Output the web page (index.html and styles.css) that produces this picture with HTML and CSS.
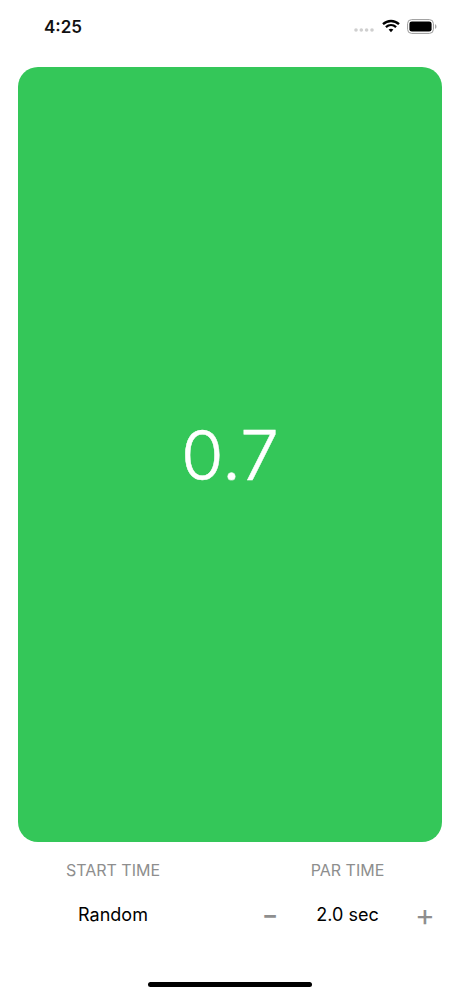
FILE: index.html
```html
<!DOCTYPE html>
<html lang="en">
<head>
<meta charset="utf-8">
<title>Timer</title>
<link rel="stylesheet" href="styles.css">
</head>
<body>
<div class="screen">
  <header class="status">
    <span class="clock">4:25</span>
    <div class="status-icons">
      <svg class="signal" width="21" height="4" viewBox="0 0 21 4"><g fill="#cfcfcf"><circle cx="2" cy="2" r="1.8"/><circle cx="7.3" cy="2" r="1.8"/><circle cx="12.6" cy="2" r="1.8"/><circle cx="18" cy="2" r="1.8"/></g></svg>
      <svg class="wifi" width="18" height="14" viewBox="0 0 18 14"><g fill="none" stroke="#000" stroke-width="2.3"><path d="M1 5.2C5.6 .9 12.4 .9 17 5.2"/><path d="M3.9 8.1C6.9 5.4 11.1 5.4 14.1 8.1"/></g><path d="M6.6 10.5C8 9.4 10 9.4 11.4 10.5L9 13.3Z" fill="#000"/></svg>
      <svg class="battery" width="30" height="15" viewBox="0 0 30 15"><rect x=".6" y=".6" width="25.8" height="13.8" rx="4" fill="#fff" stroke="#9a9a9a" stroke-width="1"/><rect x="2.4" y="2.4" width="22.2" height="10.2" rx="2.4" fill="#000"/><path d="M28 5.2c1 .4 1.5 1.2 1.5 2.3s-.5 1.900-1.500 2.300z" fill="#a8a8a8"/></svg>
    </div>
  </header>

  <main class="card">
    <span class="elapsed">0.7</span>
  </main>

  <section class="controls">
    <div class="control control-start">
      <span class="label">START TIME</span>
      <span class="value">Random</span>
    </div>
    <div class="control control-par">
      <span class="label">PAR TIME</span>
      <div class="stepper">
        <span class="step step-minus">−</span>
        <span class="value">2.0 sec</span>
        <span class="step step-plus">+</span>
      </div>
    </div>
  </section>

  <footer class="home-area">
    <div class="home-bar"></div>
  </footer>
</div>
</body>
</html>
```
FILE: styles.css
```css
* { box-sizing: border-box; }
html, body { margin: 0; padding: 0; background: #fff; }
body { font-family: Inter, "Liberation Sans", sans-serif; }

.screen {
  width: 460px;
  height: 996px;
  display: flex;
  flex-direction: column;
  overflow: hidden;
}

.status {
  height: 67px;
  flex: none;
  display: flex;
  justify-content: space-between;
  align-items: flex-start;
  padding: 16px 23px 0 44px;
}
.clock { font-size: 17px; line-height: 22px; font-weight: 600; color: #111; }
.status-icons { display: flex; align-items: center; gap: 7px; height: 20px; }
.signal { margin-top: 8px; }

.card {
  height: 775px;
  flex: none;
  margin: 0 18px;
  background: #34c759;
  border-radius: 20px;
  display: flex;
  align-items: center;
  justify-content: center;
}
.elapsed { font-size: 69px; line-height: 80px; font-weight: 300; color: #fff; -webkit-text-stroke: 0.5px #fff; }

.controls {
  flex: none;
  height: 140px;
  padding: 18px 25px 0 66px;
  display: flex;
}
.control { display: flex; flex-direction: column; align-items: center; gap: 24px; }
.control-start { width: 94px; }
.control-par { margin-left: 100px; width: 175px; }
.label { font-size: 16px; line-height: 20px; font-weight: 400; color: #8e8e8e; white-space: nowrap; }
.value { font-size: 18px; line-height: 22px; font-weight: 400; color: #000; white-space: nowrap; }
.stepper { display: flex; align-items: center; justify-content: space-between; width: 100%; height: 22px; }
.step { width: 20px; text-align: center; color: #8e8e8e; line-height: 22px; font-weight: 400; }
.step-minus { font-size: 24px; font-weight: 600; }
.step-plus { font-size: 30px; }

.home-area { flex: 1; display: flex; justify-content: center; align-items: flex-start; }
.home-bar { width: 164px; height: 5px; border-radius: 3px; background: #000; }
```
